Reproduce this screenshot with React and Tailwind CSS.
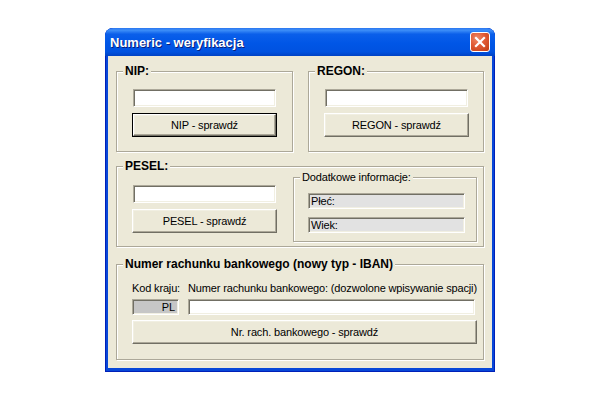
const FONT = "font-['Liberation_Sans',Arial,sans-serif]"

function Group({ title, bold = true, className = '', children }) {
  return (
    <div
      className={`relative border border-[#aca899] shadow-[inset_1px_1px_0_#fff,1px_1px_0_#fff] ${className}`}
    >
      <span
        className={`absolute left-[6px] bg-[#ece9d8] px-[2px] whitespace-nowrap ${
          bold
            ? 'top-[-8px] text-[12px] leading-[14px] font-bold'
            : 'top-[-7px] text-[11px] leading-[13px] tracking-[-0.15px]'
        }`}
      >
        {title}
      </span>
      {children}
    </div>
  )
}

function Field({ className = '', children }) {
  return (
    <div
      className={`border border-t-[#aca899] border-l-[#aca899] border-r-white border-b-white shadow-[inset_1px_1px_0_#716f64,inset_-1px_-1px_0_#f1efe2] text-[11px] leading-[13px] tracking-[-0.15px] ${className}`}
    >
      {children}
    </div>
  )
}

function Btn({ def = false, className = '', children }) {
  return (
    <div className={`${def ? 'border border-black' : ''} ${className}`}>
      <div className="w-full h-full flex items-center justify-center border border-t-white border-l-white border-r-[#716f64] border-b-[#716f64] shadow-[inset_-1px_-1px_0_#aca899,inset_1px_1px_0_#f1efe2] text-[11px] tracking-[-0.15px]">
        {children}
      </div>
    </div>
  )
}

function CheckBlock({ label, def }) {
  return (
    <div className="flex flex-col pl-[15px] pt-[17px]">
      <Field className="ml-[1px] w-[143px] h-[18px] bg-white" />
      <Btn def={def} className="mt-[6px] w-[145px] h-[24px]">
        {label}
      </Btn>
    </div>
  )
}

export default function App() {
  return (
    <div className={`w-[600px] h-[400px] bg-white flex items-center justify-center text-black ${FONT}`}>
      <div className="w-[390px] h-[344px] flex flex-col rounded-t-[8px] overflow-hidden bg-[#0747d8] shadow-[inset_0_0_0_1px_#0020b8]">
        <div className="h-[28px] shrink-0 flex items-center pl-[5px] pr-[5px] bg-[linear-gradient(to_bottom,#2a76f0_0%,#3d8ef8_8%,#0b5fea_22%,#0056e6_55%,#0052e0_85%,#0042c4_100%)]">
          <span className="flex-1 text-white text-[13px] font-bold leading-none [text-shadow:1px_1px_0_#0a1e78]">
            Numeric - weryfikacja
          </span>
          <div className="w-[20px] h-[20px] rounded-[3px] border border-white bg-[radial-gradient(circle_at_35%_30%,#f08a68_0%,#e05a34_45%,#c13c12_100%)] flex items-center justify-center">
            <svg width="12" height="12" viewBox="0 0 12 12">
              <path d="M2 2 L10 10 M10 2 L2 10" stroke="#fff" strokeWidth="2.2" strokeLinecap="square" />
            </svg>
          </div>
        </div>

        <div className="mx-[3px] mb-[4px] flex-1 bg-[#ece9d8] px-[8px] pt-[15px]">
          <div className="flex gap-[15px]">
            <Group title="NIP:" className="w-[177px] h-[81px]">
              <CheckBlock label="NIP - sprawdź" def />
            </Group>
            <Group title="REGON:" className="flex-1 h-[81px]">
              <CheckBlock label="REGON - sprawdź" />
            </Group>
          </div>

          <Group title="PESEL:" className="mt-[14px] h-[81px] flex">
            <div className="flex flex-col pl-[15px] pt-[18px]">
              <Field className="ml-[1px] w-[143px] h-[18px] bg-white" />
              <Btn className="mt-[6px] w-[145px] h-[24px]">PESEL - sprawdź</Btn>
            </div>
            <Group
              title="Dodatkowe informacje:"
              bold={false}
              className="ml-[16px] mt-[10px] w-[184px] h-[65px] flex flex-col pl-[14px] pt-[15px]"
            >
              <Field className="w-[157px] h-[16px] bg-[#e2e2e2] pl-[2px] flex items-center">Płeć:</Field>
              <Field className="mt-[8px] w-[157px] h-[16px] bg-[#e2e2e2] pl-[2px] flex items-center">Wiek:</Field>
            </Group>
          </Group>

          <Group
            title="Numer rachunku bankowego (nowy typ - IBAN)"
            className="mt-[17px] h-[96px] pl-[15px] pt-[17px]"
          >
            <div className="flex">
              <div className="w-[47px] flex flex-col">
                <span className="text-[11px] leading-[13px] tracking-[-0.15px] whitespace-nowrap">Kod kraju:</span>
                <Field className="mt-[4px] h-[16px] bg-[#c6c6c6] flex items-center justify-end pr-[3px]">PL</Field>
              </div>
              <div className="ml-[9px] w-[287px] flex flex-col">
                <span className="text-[11px] leading-[13px] tracking-[-0.15px] whitespace-nowrap">
                  Numer rachunku bankowego: (dozwolone wpisywanie spacji)
                </span>
                <Field className="mt-[4px] h-[16px] bg-white" />
              </div>
            </div>
            <Btn className="mt-[5px] w-[345px] h-[24px]">Nr. rach. bankowego - sprawdź</Btn>
          </Group>
        </div>
      </div>
    </div>
  )
}
